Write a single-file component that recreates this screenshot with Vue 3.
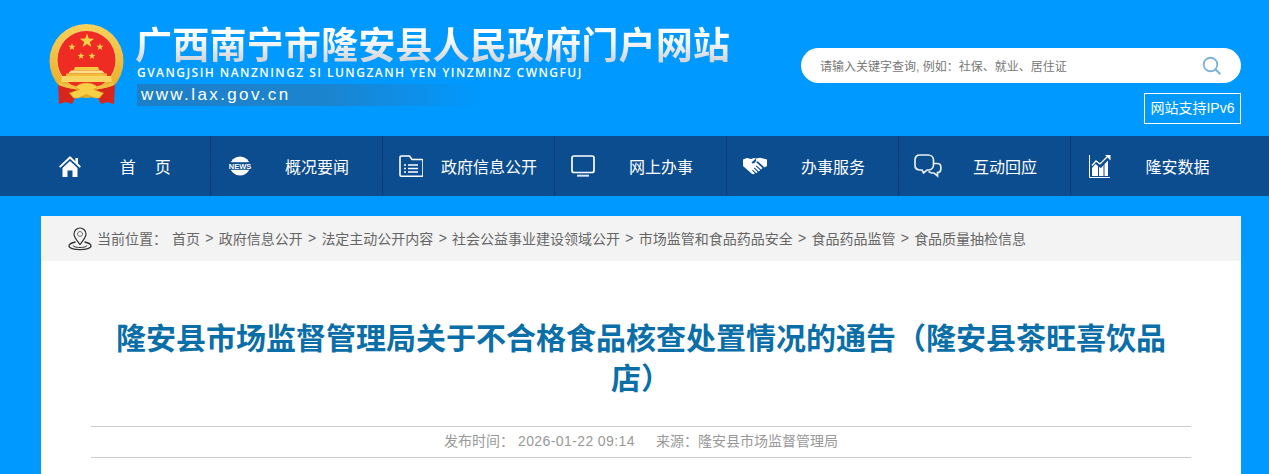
<template>
  <div class="page">
    <header class="top">
      <svg class="emblem" width="76" height="82" viewBox="0 0 76 82">
        <defs>
          <linearGradient id="gold" x1="0" y1="0" x2="0" y2="1">
            <stop offset="0" stop-color="#f8d25c" />
            <stop offset="1" stop-color="#e8a81e" />
          </linearGradient>
        </defs>
        <circle cx="37.500" cy="37" r="37" fill="url(#gold)" />
        <circle cx="37.500" cy="36" r="29.500" fill="#ee2c24" stroke="#f9dc7a" stroke-width=".8" />
        <polygon v-for="s in stars" :key="s.x" :points="starPoints(s)" fill="#f8d048" />
        <path d="M26 43h23l1.500 3.500h-26z" fill="#f6c945" />
        <path d="M22 46.500h31l3 3H19z" fill="#fbe08a" />
        <path d="M17 49.500h41v2.500H17z" fill="#f3bd35" />
        <path d="M13 52h49l1 6H12z" fill="#f9d662" />
        <path d="M9 60c8 4 17 6 28.500 6S58 64 66 60l-1 20-7-2-6 2-2-4-4-8H29l-4 8-2 4-6-2-7 2z" fill="#d9261c" />
        <path d="M10 58c8 3 17 4.500 27.500 4.500S57 61 65 58l.5 3c-8 3.500-18 5-28 5s-20-1.500-28-5z" fill="#f3c042" />
        <path d="M37.500 59c-5 0-9 1.500-11 4.500l4 2-10 3.500 4 5h5l8-3.500 8 3.500h5l4-5-10-3.500 4-2c-2-3-6-4.500-11-4.500z" fill="#f8d048" stroke="#d89a1c" stroke-width=".6" />
      </svg>

      <div class="brand">
        <h1 class="brand__title">广西南宁市隆安县人民政府门户网站</h1>
        <p class="brand__pinyin">GVANGJSIH NANZNINGZ SI LUNGZANH YEN YINZMINZ CWNGFUJ</p>
        <p class="brand__url">www.lax.gov.cn</p>
      </div>

      <div class="tools">
        <div class="search">
          <span class="search__hint">请输入关键字查询, 例如：社保、就业、居住证</span>
          <svg width="19" height="19" viewBox="0 0 19 19" fill="none" stroke="#7fb3d5">
            <circle cx="8.500" cy="8.500" r="6.800" stroke-width="1.900" />
            <path d="M13.500 13.500l4.200 4" stroke-width="2.200" stroke-linecap="round" />
          </svg>
        </div>
        <div class="ipv6">网站支持IPv6</div>
      </div>
    </header>

    <nav class="nav">
      <a v-for="item in navItems" :key="item.key" class="nav__item">
        <span class="nav__icon" :class="`nav__icon--${item.key}`">
          <svg v-if="item.key === 'home'" width="22" height="21" viewBox="0 0 22 21" fill="#fff">
            <path d="M11 0L0 10.500l1.300 1.300L11 2.700l9.700 9.100 1.300-1.300-3-2.900V2h-2.600v3.200z" />
            <path d="M3.500 12L11 5l7.500 7v9h-5v-6.500h-5V21h-5z" />
            <path d="M9.500 15.500h3V21h-3z" fill="#0c4d8f" />
          </svg>
          <svg v-else-if="item.key === 'news'" width="24" height="20" viewBox="0 0 24 20">
            <ellipse cx="12" cy="10" rx="10" ry="9.500" fill="#fff" />
            <rect y="6.200" width="24" height="7.600" fill="#0c4d8f" />
            <text x="12" y="12.800" text-anchor="middle" class="nav__news">NEWS</text>
          </svg>
          <svg v-else-if="item.key === 'folder'" width="24" height="22" viewBox="0 0 24 22" fill="none" stroke="#fff" stroke-width="1.600">
            <path d="M1 20V2.200C1 1.500 1.500 1 2.200 1h8.300l2.500 3.500h9.800c.7 0 1.200.5 1.200 1.200V20c0 .7-.5 1.200-1.200 1.200H2.200C1.500 21.200 1 20.700 1 20z" />
            <path d="M5 10h2M9 10h10M5 13.500h2M9 13.500h10M5 17h2M9 17h10" />
          </svg>
          <svg v-else-if="item.key === 'screen'" width="24" height="22" viewBox="0 0 24 22" fill="none" stroke="#fff">
            <rect x="1" y="1" width="22" height="16.500" rx="2" stroke-width="1.700" />
            <path d="M6 20.700h12" stroke-width="2" stroke="#d8e6f2" />
          </svg>
          <svg v-else-if="item.key === 'hands'" width="24" height="18" viewBox="0 0 24 18" fill="#fff">
            <path d="M0 2.500l4-1.500 4 1 3-1 2 .5-4 3.500c-.6.700 0 1.700 1 1.500l3-1.500 6.500 6-1.500 1.500-4.500-4-.7.700 4.300 4-1.300 1.300-4.300-4-.7.700 3.800 3.700-1.300 1.300-3.500-3.500-.7.700 2.800 2.800-1 1-1.800-.3-8-7L0 9z" />
            <path d="M13 1.500l4-.7 3 .7 4 1V9l-2.500 1.500-6.800-6.300-3 1.500 1.300-1.700z" />
          </svg>
          <svg v-else-if="item.key === 'chat'" width="28" height="24" viewBox="0 0 28 24" fill="none" stroke="#e6eef6" stroke-width="1.700">
            <path d="M6 1h8c3 0 5.500 2 5.500 5v5c0 3-2.500 5-5.500 5h-1l-3.500 3-1.500-3H6c-3 0-5-2-5-5V6c0-3 2-5 5-5z" />
            <path d="M19.500 9.500h3.500c2 0 3.800 1.200 3.800 3.300v2.400c0 2-1.500 3.300-3.300 3.300v3.500l-3.500-3h-2.500l-3-1.500" />
          </svg>
          <svg v-else width="22" height="23" viewBox="0 0 22 23" fill="#fff">
            <path d="M.5 0v22.500H21" fill="none" stroke="#fff" />
            <path d="M3 21v-8l3.500-4L9 11v10zM10 21V12l2 1 2.500-3v11zM15.500 21V9l3.500-3.500V21z" />
            <path d="M3 10.500l4-4.500 4 3 7-7" fill="none" stroke="#fff" stroke-width="1.300" />
            <path d="M16 0h5.500v5.500z" />
          </svg>
        </span>
        <span class="nav__text" :class="{ 'nav__text--wide': item.key === 'home' }">{{ item.label }}</span>
      </a>
    </nav>

    <main class="content">
      <div class="crumb">
        <svg class="crumb__icon" width="24" height="24" viewBox="0 0 24 24" fill="none" stroke="#333">
          <path d="M12 17.500C9 13.500 6 10.500 6 7a6 6 0 0 1 12 0c0 3.500-3 6.500-6 10.500z" stroke-width="1.200" />
          <circle cx="12" cy="7" r="2.500" stroke="#777" />
          <path d="M7.500 15C3.500 15.800 1 17.300 1 19c0 2 4.800 3.600 11 3.600S23 21 23 19c0-1.700-2.500-3.200-6.500-4" stroke-width="1.300" />
          <path d="M5 18.500c0 1 3 2 7 2s7-1 7-2" stroke-width="1" />
        </svg>
        <span class="crumb__label">当前位置：</span>
        <template v-for="(c, i) in crumbs" :key="c">
          <span v-if="i" class="crumb__sep">&gt;</span>
          <span>{{ c }}</span>
        </template>
      </div>

      <article class="article">
        <h2 class="article__title">隆安县市场监督管理局关于不合格食品核查处置情况的通告（隆安县茶旺喜饮品店）</h2>
        <div class="article__meta">
          <span>发布时间： <span class="article__date">2026-01-22 09:14</span></span>
          <span>来源：隆安县市场监督管理局</span>
        </div>
      </article>
    </main>
  </div>
</template>

<script setup>
const navItems = [
  { key: "home", label: "首　页" },
  { key: "news", label: "概况要闻" },
  { key: "folder", label: "政府信息公开" },
  { key: "screen", label: "网上办事" },
  { key: "hands", label: "办事服务" },
  { key: "chat", label: "互动回应" },
  { key: "chart", label: "隆安数据" },
];

const crumbs = [
  "首页",
  "政府信息公开",
  "法定主动公开内容",
  "社会公益事业建设领域公开",
  "市场监管和食品药品安全",
  "食品药品监管",
  "食品质量抽检信息",
];

const stars = [
  { x: 38, y: 17, r: 7.500 },
  { x: 23, y: 23, r: 3.800 },
  { x: 51, y: 23, r: 3.800 },
  { x: 32, y: 32, r: 3.600 },
  { x: 43, y: 32, r: 3.600 },
];

function starPoints(s) {
  const pts = [];
  for (let i = 0; i < 10; i++) {
    const r = i % 2 ? s.r * 0.4 : s.r;
    const a = (Math.PI / 5) * i - Math.PI / 2;
    pts.push(`${s.x + r * Math.cos(a)},${s.y + r * Math.sin(a)}`);
  }
  return pts.join(" ");
}
</script>

<style scoped>
.page {
  font-family: "Liberation Sans", "Noto Sans CJK SC", sans-serif;
  text-spacing-trim: space-all;
}

.top {
  height: 136px;
  box-sizing: border-box;
  background: #0099ff;
  padding: 24px 28px 0 49px;
  display: flex;
  align-items: flex-start;
}

.emblem {
  flex-shrink: 0;
}

.brand {
  margin-left: 12px;
  flex: 1;
  min-width: 0;
}

.brand__title {
  margin: -1px 0 0 -2px;
  height: 40px;
  font-size: 37.200px;
  line-height: 40px;
  font-weight: 700;
  white-space: nowrap;
  font-family: "Noto Sans CJK SC", sans-serif;
  background: linear-gradient(#ffffff 35%, #cfd6dc 95%);
  -webkit-background-clip: text;
  background-clip: text;
  color: transparent;
}

.brand__pinyin {
  margin: 3px 0 0;
  font-size: 12px;
  line-height: 14px;
  font-weight: 600;
  font-family: "Open Sans", sans-serif;
  letter-spacing: 1.460px;
  color: #fff;
  white-space: nowrap;
}

.brand__url {
  margin: 4px 0 0;
  width: 345px;
  height: 22px;
  box-sizing: border-box;
  padding-left: 4px;
  font-size: 17px;
  line-height: 22px;
  letter-spacing: 2.400px;
  color: #fff;
  background: linear-gradient(to right, #1c80c8 0%, #1c84cf 55%, rgba(0, 153, 255, 0) 100%);
}

.tools {
  flex-shrink: 0;
  width: 440px;
  padding-top: 24px;
  display: flex;
  flex-direction: column;
  align-items: flex-end;
}

.search {
  width: 100%;
  height: 35px;
  box-sizing: border-box;
  padding: 0 20px 0 19px;
  border-radius: 18px;
  background: #fff;
  display: flex;
  align-items: center;
  justify-content: space-between;
}

.search__hint {
  font-size: 12px;
  color: #777;
}

.ipv6 {
  margin-top: 10px;
  width: 97px;
  height: 31px;
  box-sizing: border-box;
  border: 1px solid #fff;
  color: #fff;
  font-size: 14px;
  line-height: 29px;
  text-align: center;
  white-space: nowrap;
}

.nav {
  height: 60px;
  background: #0c4d8f;
  padding-left: 39px;
  display: flex;
}

.nav__item {
  width: 172px;
  box-sizing: border-box;
  display: flex;
  align-items: center;
  border-right: 1px solid #0a3f73;
  color: #fff;
  font-size: 16px;
}

.nav__item:last-child {
  border-right: none;
}

.nav__icon {
  width: 41px;
  box-sizing: border-box;
  padding-left: 16px;
  display: flex;
  flex-shrink: 0;
}

.nav__icon--home {
  padding-left: 20px;
}

.nav__icon--news {
  padding-left: 17px;
}

.nav__icon--chat {
  padding-left: 15px;
}

.nav__icon--chart {
  padding-left: 18px;
}

.nav__icon svg {
  flex-shrink: 0;
}

.nav__text {
  flex: 1;
  margin-top: -1px;
  text-align: center;
  white-space: nowrap;
}

.nav__text--wide {
  margin-left: 2px;
  letter-spacing: 1.500px;
}

.nav__news {
  font-size: 7.500px;
  font-weight: 700;
  fill: #fff;
}

.content {
  width: 1200px;
  min-height: 258px;
  margin: 20px 0 0 41px;
  background: #fff;
}

.crumb {
  height: 45px;
  box-sizing: border-box;
  background: #f3f3f3;
  padding: 0 0 2px 27px;
  display: flex;
  align-items: center;
  font-size: 14px;
  color: #666;
  white-space: nowrap;
}

.crumb__icon {
  margin: 2px 5px 0 0;
  flex-shrink: 0;
}

.crumb__label {
  margin-right: 5px;
}

.crumb__sep {
  margin: 0 5.250px;
}

.article {
  padding: 55px 50px 0;
}

.article__title {
  margin: 0;
  font-size: 30px;
  line-height: 40px;
  font-weight: 700;
  color: #0a6ea8;
  text-align: center;
  font-family: "Noto Sans CJK SC", sans-serif;
}

.article__meta {
  margin-top: 30px;
  height: 30px;
  box-sizing: content-box;
  border-top: 1px solid #ccc;
  border-bottom: 1px solid #ccc;
  display: flex;
  justify-content: center;
  align-items: center;
  gap: 21px;
  font-size: 14px;
  color: #999;
}

.article__meta > span {
  margin-top: -4px;
}

.article__date {
  letter-spacing: 0.400px;
}
</style>

<style>
html,
body {
  margin: 0;
  height: 474px;
  overflow: hidden;
  background: #0099ff;
}
</style>
